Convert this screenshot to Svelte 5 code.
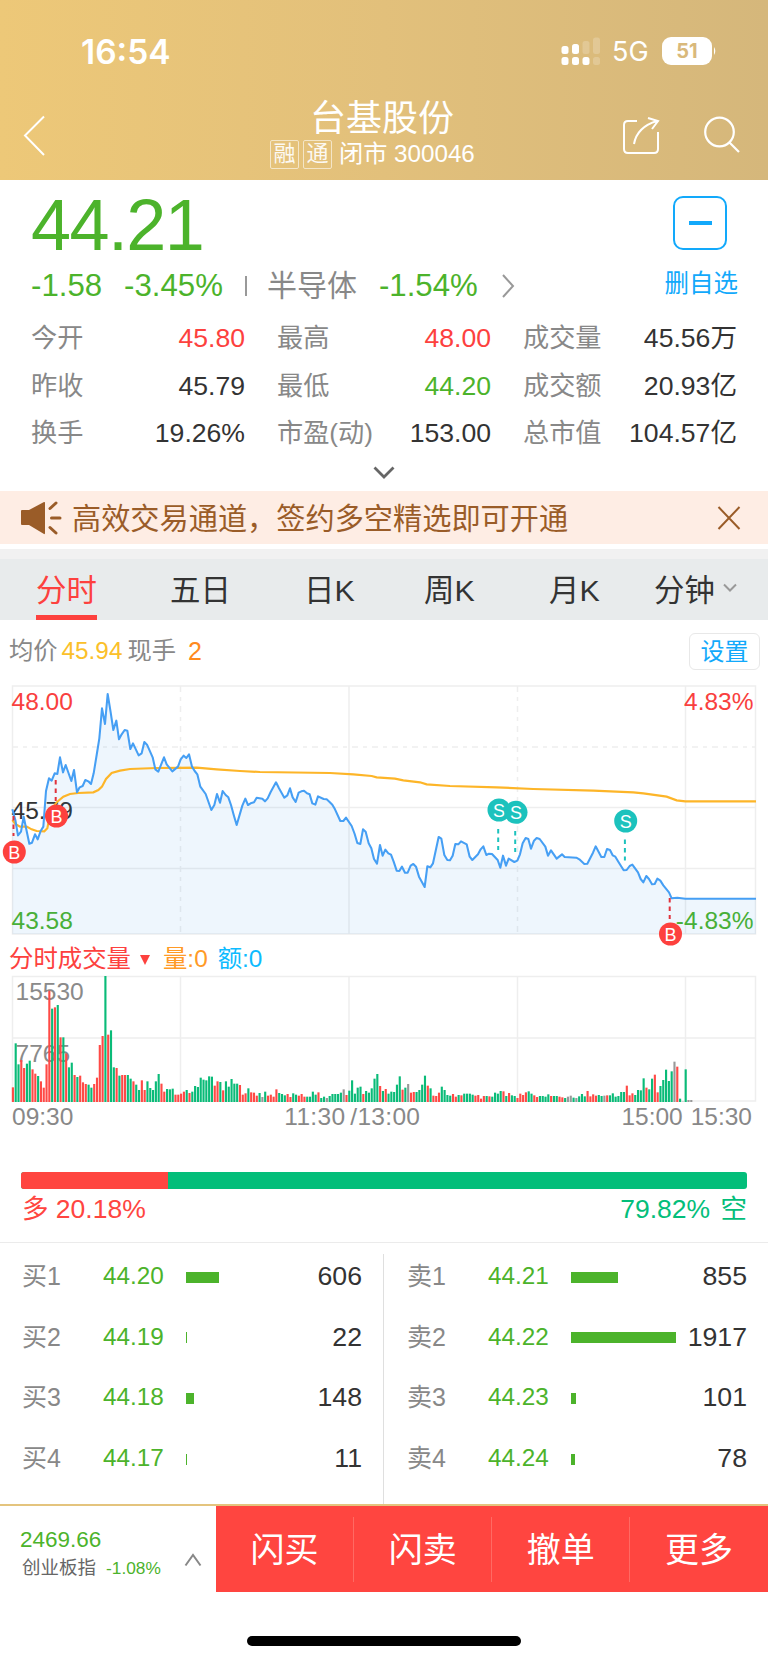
<script>
  const stats = [
    { label: '今开', value: '45.80', tone: 'red' },
    { label: '最高', value: '48.00', tone: 'red' },
    { label: '成交量', value: '45.56万', tone: '' },
    { label: '昨收', value: '45.79', tone: '' },
    { label: '最低', value: '44.20', tone: 'green' },
    { label: '成交额', value: '20.93亿', tone: '' },
    { label: '换手', value: '19.26%', tone: '' },
    { label: '市盈(动)', value: '153.00', tone: '' },
    { label: '总市值', value: '104.57亿', tone: '' }
  ];

  const tabs = ['分时', '五日', '日K', '周K', '月K', '分钟'];
  let active = $state('分时');

  // chart coordinates are in thirds of a pixel
  const price =
    '37,388 46,420 54,466 63,455 71,410 88,491 96,488 105,463 113,478 122,453 130,440 138,333 147,295 155,302 164,280 172,282 180,232 189,277 197,255 214,303 222,270 231,337 239,322 248,318 256,300 265,304 273,312 281,280 290,225 298,175 306,85 315,132 323,42 332,97 340,150 349,122 357,178 365,163 374,150 382,152 391,207 399,190 416,226 425,220 433,186 441,194 458,232 466,268 475,275 492,232 500,253 517,274 534,260 542,238 551,227 559,234 567,223 576,260 584,273 592,283 601,320 617,342 634,390 643,375 651,342 660,368 668,333 677,345 685,352 693,375 702,408 710,435 727,377 736,356 744,375 752,370 762,367 770,353 787,356 795,364 803,355 812,336 828,307 837,325 853,353 862,346 870,325 878,352 887,366 896,338 904,334 912,332 921,340 929,343 937,370 946,374 954,349 971,357 980,358 988,365 997,374 1005,388 1021,423 1030,423 1038,413 1055,438 1064,462 1072,489 1081,492 1089,448 1097,455 1106,490 1114,505 1122,537 1131,551 1140,495 1148,527 1156,509 1165,520 1173,524 1181,545 1190,572 1198,573 1206,560 1215,578 1223,578 1232,557 1240,552 1248,560 1257,590 1274,621 1282,559 1291,562 1299,550 1316,471 1324,476 1333,525 1342,540 1350,541 1358,527 1366,492 1375,493 1383,484 1400,493 1409,530 1417,540 1434,523 1442,508 1450,499 1459,525 1467,521 1476,522 1493,540 1501,563 1509,527 1518,557 1526,536 1543,546 1552,542 1560,523 1568,490 1577,474 1585,477 1593,506 1602,482 1610,474 1619,477 1636,500 1644,527 1653,511 1670,536 1686,523 1694,531 1729,533 1738,538 1753,552 1762,551 1779,518 1787,499 1804,531 1813,531 1821,507 1830,510 1838,526 1846,530 1855,545 1871,571 1880,570 1889,558 1897,554 1914,577 1922,597 1930,607 1939,588 1947,597 1956,613 1964,612 1972,596 1981,602 1990,616 2007,637 2015,655 2032,653 2056,656 2268,656';
  const average =
    '37,420 46,432 60,440 80,440 95,448 110,453 133,454 142,445 150,405 160,380 172,365 190,350 210,342 235,339 280,337 295,330 306,320 318,297 335,279 360,272 390,267 470,264 590,263 650,268 720,273 780,276 990,279 1060,283 1115,288 1130,292 1185,296 1210,301 1260,307 1280,313 1350,318 1490,322 1600,327 1780,332 1900,337 1930,340 2000,350 2030,361 2056,364 2268,364';

  const marks = [
    { type: 'B', x: 14.3, y: 852, from: 816, to: 836 },
    { type: 'B', x: 56.5, y: 816, from: 780, to: 801 },
    { type: 'S', x: 499, y: 810, from: 829, to: 850 },
    { type: 'S', x: 516, y: 812.3, from: 831, to: 852 },
    { type: 'S', x: 625.7, y: 821, from: 839.5, to: 860.5 },
    { type: 'B', x: 670.5, y: 934, from: 898, to: 919 }
  ];

  // one entry per minute: direction and bar top
  const volume = (
    'r442 g310 g373 r360 r384 g371 g362 r388 r401 g408 r424 r443 r373 r152 g206 r202 g195 r292 g292 r341 g382 g368 r405 g411 r407 r427 r432 g434 g443 r432 ' +
    'r413 r315 r288 g108 r284 g271 g382 r384 g407 r405 r405 g405 g416 r424 g434 g450 r421 r450 g424 g444 g450 g424 g402 r431 r455 g447 g448 g446 r464 r464 ' +
    'r461 r455 g450 r459 g455 g438 g441 g413 g419 g421 g409 g410 r437 r424 g426 r451 g424 g440 g417 g431 g431 r435 r464 r460 g445 r457 r458 r467 g459 n471 ' +
    'g455 r467 r464 r470 r448 g459 g462 g466 r462 r471 g460 g464 r467 r462 r470 g470 g470 g455 g464 r457 g474 g470 n474 g468 g462 g462 g462 g458 n448 r465 ' +
    'g452 g421 g461 g443 g440 r462 g453 g458 g445 g416 g402 r438 g453 r447 g461 g455 g456 g434 g409 r449 g443 n432 r458 r456 g456 g450 g434 g407 r437 g445 ' +
    'r467 r468 r458 g440 g450 g465 g467 r462 r470 g465 r466 g461 g461 g461 g464 r467 r465 r476 r468 g468 r469 g470 g458 g461 g453 r454 g468 r459 g466 g468 ' +
    'r474 r461 r465 r457 g454 g461 r466 r471 g468 g468 g470 g463 r468 g468 g468 r470 r472 g474 n470 n467 g473 n474 g469 g462 g469 r453 r469 r463 r467 g465 ' +
    'g468 n467 r466 g466 g460 g470 g468 g456 g456 r437 r466 r460 g465 g450 g451 g415 r443 g448 g416 r404 r457 g438 g420 g389 g423 g394 n365 r380 g476 n485 g388 n480 n480'
  )
    .split(' ')
    .map((s, i) => ({ dir: s[0], x: 35.5 + i * 8.41, top: Number(s.slice(1)) }));

  const buys = [
    { label: '买1', price: '44.20', count: 606, width: 33 },
    { label: '买2', price: '44.19', count: 22, width: 1 },
    { label: '买3', price: '44.18', count: 148, width: 8 },
    { label: '买4', price: '44.17', count: 11, width: 1 }
  ];
  const sells = [
    { label: '卖1', price: '44.21', count: 855, width: 47 },
    { label: '卖2', price: '44.22', count: 1917, width: 105 },
    { label: '卖3', price: '44.23', count: 101, width: 5 },
    { label: '卖4', price: '44.24', count: 78, width: 4 }
  ];
</script>

<div class="page">
  <header>
    <div class="status">
      <span class="clock">16:54</span>
      <svg class="signal" width="40" height="28" viewBox="0 0 40 28" fill="#fff">
        <rect x="0.5" y="9" width="7" height="8" rx="2.5" />
        <rect x="11" y="7" width="7" height="10" rx="2.5" />
        <rect x="21.5" y="4" width="7" height="13" rx="2.5" opacity=".2" />
        <rect x="32" y="0.5" width="7" height="16.5" rx="2.5" opacity=".2" />
        <rect x="0.5" y="20" width="7" height="8" rx="2.5" />
        <rect x="11" y="20" width="7" height="8" rx="2.5" />
        <rect x="21.5" y="20" width="7" height="8" rx="2.5" />
        <rect x="32" y="20" width="7" height="8" rx="2.5" opacity=".2" />
      </svg>
      <span class="net">5G</span>
      <span class="battery">51</span>
      <svg width="5" height="10" viewBox="0 0 5 10"><path d="M2 1Q4.6 5 2 9Z" fill="#fff" /></svg>
    </div>
    <div class="nav">
      <svg class="back" width="24" height="42" viewBox="0 0 24 42" fill="none" stroke="#fff" stroke-width="2">
        <path d="M21 1.5 2 20.5 21 40" />
      </svg>
      <div class="title">
        <h1>台基股份</h1>
        <div class="sub"><i>融</i><i>通</i><span>闭市 300046</span></div>
      </div>
      <svg class="share" width="38" height="38" viewBox="0 0 38 38" fill="none" stroke="#fff" stroke-width="2">
        <path d="M15 4H6Q2 4 2 8V32Q2 36 6 36H32Q36 36 36 32V15" />
        <path d="M12 27Q15 10 35 4M26 1 36 4 30 12" />
      </svg>
      <svg class="search" width="38" height="38" viewBox="0 0 38 38" fill="none" stroke="#fff" stroke-width="2.2">
        <circle cx="16.5" cy="16" r="14.3" />
        <path d="M26 26 36 36" />
      </svg>
    </div>
  </header>

  <section class="quote">
    <div class="top">
      <span class="last">44.21</span>
      <span class="minus"></span>
    </div>
    <div class="change">
      <span class="green">-1.58</span>
      <span class="green pct">-3.45%</span>
      <span class="sep"></span>
      <span class="industry">半导体</span>
      <span class="green">-1.54%</span>
      <svg width="14" height="26" viewBox="0 0 14 26" fill="none" stroke="#999" stroke-width="2"><path d="M2 2 12 13 2 24" /></svg>
      <span class="remove">删自选</span>
    </div>
    <div class="stats">
      {#each stats as s}
        <div class="stat"><span>{s.label}</span><b class={s.tone}>{s.value}</b></div>
      {/each}
    </div>
    <svg class="more" width="22" height="14" viewBox="0 0 22 14" fill="none" stroke="#666" stroke-width="2.8"><path d="M1.5 1.5 11 11 20.5 1.5" /></svg>
  </section>

  <div class="notice">
    <svg width="42" height="34" viewBox="0 0 42 34" fill="#9a5c28">
      <path d="M0 10Q0 9 1 9H8L23 1Q24 .5 24 2V32Q24 33.5 23 33L8 24H1Q0 24 0 23Z" />
      <path d="M29 7.500 35 2M30.500 17H39M29 26.500 35 32" stroke="#9a5c28" stroke-width="3" stroke-linecap="round" />
    </svg>
    <p>高效交易通道，签约多空精选即可开通</p>
    <svg width="24" height="24" viewBox="0 0 24 24" stroke="#9a5c28" stroke-width="2"><path d="M1.5 1 22.5 23M22.5 1 1.5 23" /></svg>
  </div>

  <nav class="tabs">
    {#each tabs as tab}
      <button class:active={active === tab} onclick={() => (active = tab)}>
        <span>{tab}</span>
        {#if tab === '分钟'}
          <svg width="16" height="10" viewBox="0 0 16 10" fill="none" stroke="#999" stroke-width="2"><path d="M2 1.5 8 7.5 14 1.5" /></svg>
        {/if}
      </button>
    {/each}
  </nav>

  <div class="legend">
    <span>均价</span><span class="avg">45.94</span><span>现手</span><span class="hand">2</span>
    <button class="set">设置</button>
  </div>

  <svg class="chart" width="768" height="260" viewBox="0 680 768 260">
    <g class="grid">
      <rect x="12.5" y="686" width="743" height="248" />
      <path d="M12 807.5H756M12 868.5H756M349 686V934M685.5 686V934" />
      <path d="M12 747H756M180.5 686V934M517.5 686V934" stroke-dasharray="6 5 4 5" />
    </g>
    <g class="label">
      <text x="11.500" y="709.5" fill="#f9403e">48.00</text>
      <text x="753.500" y="709.5" text-anchor="end" fill="#f9403e">4.83%</text>
      <text x="11.500" y="818.5" fill="#333">45.79</text>
      <text x="11.500" y="929" fill="#4cb32b">43.58</text>
      <text x="753.500" y="929" text-anchor="end" fill="#4cb32b">-4.83%</text>
    </g>
    <g transform="translate(0 680) scale(.33333)">
      <polygon points="37,762 {price} 2268,762" fill="#1f87e8" fill-opacity=".075" />
      <polyline points={average} fill="none" stroke="#fdb528" stroke-width="6.5" />
      <polyline points={price} fill="none" stroke="#469ff4" stroke-width="6.2" stroke-linejoin="round" />
    </g>
    {#each marks as m}
      <g class={m.type === 'B' ? 'buy' : 'sell'}>
        <path d="M{m.x - 0.8} {m.from}V{m.to}" stroke-dasharray="4.5 4" />
        <circle cx={m.x} cy={m.y} r="11.5" />
        <text x={m.x} y={m.y + 6.5}>{m.type}</text>
      </g>
    {/each}
  </svg>

  <div class="vol-head">
    <span class="name">分时成交量</span><i></i><span class="amount">量:0</span><span class="money">额:0</span>
  </div>

  <svg class="chart" width="768" height="128" viewBox="0 975 768 128">
    <g class="grid">
      <rect x="12.5" y="976.5" width="743" height="124.5" />
      <path d="M12 1038H756M180.5 976V1101M349 976V1101M517.5 976V1101M685.5 976V1101" />
    </g>
    <g class="label" fill="#8a8a8a">
      <text x="15.5" y="1000">15530</text>
      <text x="15.5" y="1061.5">7765</text>
    </g>
    <g transform="translate(0 940) scale(.33333)">
      {#each volume as v}
        <rect class={v.dir} x={v.x} y={v.top} width="6.4" height={486 - v.top} />
      {/each}
    </g>
  </svg>

  <div class="axis">
    <span>09:30</span>
    <span class="noon"><span>11:30</span><span>/13:00</span></span>
    <span class="close">15:00</span>
    <span>15:30</span>
  </div>

  <section class="ratio">
    <div class="bar"><span style="width: 20.18%"></span></div>
    <div class="sides"><span class="long">多 20.18%</span><span class="short">79.82% 空</span></div>
  </section>

  <section class="book">
    {#each [buys, sells] as side}
      <ul>
        {#each side as row}
          <li>
            <span class="level">{row.label}</span>
            <span class="price">{row.price}</span>
            <span class="depth"><i style="width: {row.width}px"></i></span>
            <span class="count">{row.count}</span>
          </li>
        {/each}
      </ul>
    {/each}
  </section>

  <footer>
    <div class="index">
      <div>
        <p class="point">2469.66</p>
        <p class="cyb">创业板指<span>-1.08%</span></p>
      </div>
      <svg width="18" height="14" viewBox="0 0 18 14" fill="none" stroke="#888" stroke-width="2"><path d="M1.5 12.5 9 2 16.5 12.5" /></svg>
    </div>
    <button>闪买</button>
    <button>闪卖</button>
    <button>撤单</button>
    <button>更多</button>
  </footer>
  <div class="home"></div>
</div>

<style>
  :global(body) {
    margin: 0;
    background: #fff;
  }

  .page {
    width: 768px;
    height: 1663px;
    overflow: hidden;
    display: flex;
    flex-direction: column;
    background: #fff;
    color: #333;
    font-family: 'Liberation Sans', 'Noto Sans CJK SC', sans-serif;
  }
  .page > * {
    flex: none;
  }
  h1, p, ul {
    margin: 0;
    padding: 0;
    font-weight: 400;
  }
  i {
    font-style: normal;
  }
  svg {
    display: block;
    flex: none;
  }
  button {
    border: 0;
    padding: 0;
    background: none;
    font-family: inherit;
    color: inherit;
  }
  .green { color: #4cb32b; }
  .red { color: #fd413e; }

  header {
    height: 180px;
    background: linear-gradient(90deg, #edc878, #e2c07b 50%, #d5b77b);
    color: #fff;
  }
  .status {
    height: 65px;
    padding: 37px 0 0 81px;
    box-sizing: border-box;
    display: flex;
    align-items: center;
    font-family: Inter, sans-serif;
  }
  .clock {
    width: 480px;
    font-size: 33.5px;
    font-weight: 600;
    line-height: 30px;
    padding-top: 2px;
  }
  .net {
    width: 50px;
    margin-left: 11px;
    padding-top: 2px;
    font-size: 27px;
    line-height: 28px;
    white-space: nowrap;
  }
  .battery {
    width: 50px;
    height: 28px;
    line-height: 29px;
    border-radius: 9px;
    background: #fff;
    color: #d9b97b;
    font-size: 20px;
    font-weight: 700;
    text-align: center;
  }
  .nav {
    height: 115px;
    display: flex;
    align-items: flex-start;
  }
  .back {
    margin: 50px 0 0 23px;
  }
  .title {
    width: 210px;
    margin: 32px 0 0 221px;
  }
  h1 {
    margin-left: 42px;
    font-size: 36px;
    line-height: 44px;
    white-space: nowrap;
  }
  .sub {
    display: flex;
    align-items: center;
    font-size: 24.2px;
    line-height: 32px;
    margin-top: -3px;
    margin-left: 2px;
    white-space: nowrap;
  }
  .sub i {
    width: 27px;
    height: 27px;
    margin-right: 4px;
    border: 1px solid #f6ead0;
    border-radius: 2px;
    font-size: 22px;
    line-height: 26px;
    text-align: center;
    opacity: .9;
  }
  .sub span {
    margin-left: 3px;
  }
  .share {
    margin: 52px 0 0 144px;
  }
  .search {
    margin: 51px 0 0 43px;
  }

  .quote {
    height: 311px;
    padding: 0 31px;
    box-sizing: border-box;
  }
  .top {
    height: 79px;
    display: flex;
    justify-content: space-between;
  }
  .last {
    color: #4cb32b;
    font-size: 72px;
    letter-spacing: -1.6px;
    line-height: 90px;
  }
  .minus {
    width: 50px;
    height: 50px;
    margin: 16px 10px 0 0;
    border: 2px solid #12a9fb;
    border-radius: 10px;
    background: linear-gradient(#12a9fb, #12a9fb) center / 23px 4px no-repeat;
  }
  .change {
    height: 52px;
    padding-top: 1px;
    box-sizing: border-box;
    display: flex;
    align-items: center;
    font-size: 31.2px;
    line-height: 52px;
    white-space: nowrap;
  }
  .pct {
    margin-left: 22px;
  }
  .sep {
    width: 2px;
    height: 20px;
    margin: 0 20px 0 22px;
    background: #999;
  }
  .industry {
    margin-right: 22px;
    color: #888;
    font-size: 30px;
  }
  .change svg {
    margin-left: 23px;
  }
  .remove {
    margin-left: auto;
    margin-right: -1px;
    margin-top: -4px;
    color: #12a9fb;
    font-size: 24.5px;
  }
  .stats {
    display: grid;
    grid-template-columns: 214px 214px 214px;
    column-gap: 32px;
    grid-auto-rows: 47.7px;
    padding-top: 3px;
  }
  .stat {
    display: flex;
    justify-content: space-between;
    font-size: 26.6px;
    line-height: 48px;
    white-space: nowrap;
  }
  .stat span {
    color: #888;
    font-size: 26.2px;
  }
  .stat b {
    font-weight: 400;
  }
  .more {
    margin: 9px auto 0;
  }

  .notice {
    height: 53px;
    padding: 0 27px 0 21px;
    display: flex;
    align-items: center;
    background: #feede4;
    border-bottom: 5px solid #fff;
    color: #9a5c28;
  }
  .notice p {
    flex: 1;
    margin: 3px 0 0 9px;
    font-size: 29.2px;
    line-height: 50px;
  }

  .tabs {
    height: 61px;
    display: grid;
    grid-template-columns: 134px 134px 120px 125px 105px 1fr;
    justify-items: start;
    border-top: 10px solid #f1f1f1;
    padding: 0 0 0 36px;
    background: #e8ebec;
    margin-bottom: 1px;
  }
  .tabs button {
    display: flex;
    align-items: center;
    font-size: 30.4px;
    border-bottom: 5px solid transparent;
    border-top: 1px solid transparent;
  }
  .tabs svg {
    margin-left: 7px;
  }
  .tabs .active {
    color: #fd413e;
    border-bottom-color: #fd413e;
  }

  .legend {
    height: 59px;
    display: flex;
    align-items: center;
    padding: 0 8px 0 9px;
    color: #888;
    font-size: 24.3px;
    line-height: 36px;
  }
  .legend span {
    padding-top: 1px;
  }
  .avg {
    margin: 0 5px 0 4px;
    color: #fbc02a;
    font-size: 24.3px;
  }
  .hand {
    margin-left: 12px;
    color: #ff8a1e;
    font-size: 25px;
  }
  .set {
    width: 71px;
    height: 37px;
    margin: 2px 0 0 auto;
    border: 1.5px solid #e8e8e8;
    border-radius: 6px;
    color: #12a9fb;
    font-size: 24px;
    line-height: 34px;
  }

  .chart {
    overflow: visible;
  }
  .grid {
    fill: none;
    stroke: #eee;
    stroke-width: 1.5;
  }
  .label {
    font-size: 24.5px;
  }
  .buy circle { fill: #fd413e; }
  .buy path { stroke: #e0333c; stroke-width: 2; }
  .sell circle { fill: #1cc2bd; }
  .sell path { stroke: #1cc2bd; stroke-width: 2; }
  .buy text, .sell text {
    fill: #fff;
    font-size: 18px;
    text-anchor: middle;
  }
  .r { fill: #ff4a46; }
  .g { fill: #0abb78; }
  .n { fill: #999; }

  .vol-head {
    height: 35px;
    display: flex;
    align-items: center;
    padding-left: 9px;
    font-size: 24.4px;
    line-height: 35px;
  }
  .vol-head span {
    padding-top: 2px;
  }
  .name {
    color: #fd413e;
  }
  .vol-head i {
    margin: 5px 13px 0 9px;
    border: 5px solid transparent;
    border-top: 10px solid #fd413e;
    border-bottom: 0;
  }
  .amount {
    margin-right: 10px;
    color: #ff9a27;
  }
  .money {
    color: #0dbbff;
  }

  .axis {
    height: 27px;
    display: flex;
    padding: 0 16px 0 12px;
    color: #888;
    font-size: 24.5px;
    line-height: 27px;
  }
  .noon {
    display: flex;
    gap: 5px;
    margin-left: 211px;
    letter-spacing: .3px;
  }
  .close {
    margin: 0 8px 0 auto;
  }

  .ratio {
    height: 70px;
    padding: 42px 21px 0;
    border-bottom: 1px solid #ebebeb;
  }
  .bar {
    height: 17px;
    border-radius: 3px;
    overflow: hidden;
    background: #03be7a;
  }
  .bar span {
    display: block;
    height: 100%;
    background: #ff4540;
  }
  .sides {
    display: flex;
    justify-content: space-between;
    padding-left: 1px;
    font-size: 26.5px;
    line-height: 41px;
  }
  .long { color: #ff4540; }
  .short {
    color: #03be7a;
    word-spacing: 3px;
  }

  .book {
    height: 250px;
    padding-top: 11px;
    display: flex;
    overflow: hidden;
  }
  .book ul {
    width: 340px;
    padding: 0 21px 0 22px;
    list-style: none;
  }
  .book ul + ul {
    padding-left: 23px;
    border-left: 1px solid #dfdfdf;
  }
  .book li {
    height: 60.6px;
    display: flex;
    align-items: center;
    line-height: 44px;
    margin-top: -8px;
    margin-bottom: 8px;
  }
  .level {
    width: 81px;
    color: #888;
    font-size: 25px;
  }
  .price {
    width: 82.5px;
    color: #4cb32b;
    font-size: 24.3px;
  }
  .depth i {
    display: block;
    height: 11px;
    margin-top: 2px;
    background: #4cb32b;
  }
  .count {
    margin-left: auto;
    font-size: 26.7px;
  }

  footer {
    height: 86px;
    display: flex;
    border-top: 2px solid #e4c47e;
  }
  .index {
    width: 215.5px;
    padding: 0 14px 0 20px;
    box-sizing: border-box;
    display: flex;
    justify-content: space-between;
    white-space: nowrap;
  }
  .point {
    margin-top: 19px;
    color: #4cb32b;
    font-size: 22.5px;
    line-height: 30px;
  }
  .cyb {
    margin-left: 2px;
    color: #666;
    font-size: 18.5px;
    line-height: 26px;
  }
  .cyb span {
    margin-left: 10px;
    color: #4cb32b;
    font-size: 17.3px;
  }
  .index svg {
    margin-top: 47px;
  }
  footer button {
    flex: 1;
    padding-bottom: 3px;
    background: linear-gradient(#ff6a63, #ff6a63) right center / 1px 65px no-repeat #ff4540;
    color: #fff;
    font-size: 34px;
  }
  footer button:last-child {
    background: #ff4540;
  }
  .home {
    width: 274px;
    height: 10px;
    margin: 44px auto 0;
    border-radius: 5px;
    background: #000;
  }
</style>
